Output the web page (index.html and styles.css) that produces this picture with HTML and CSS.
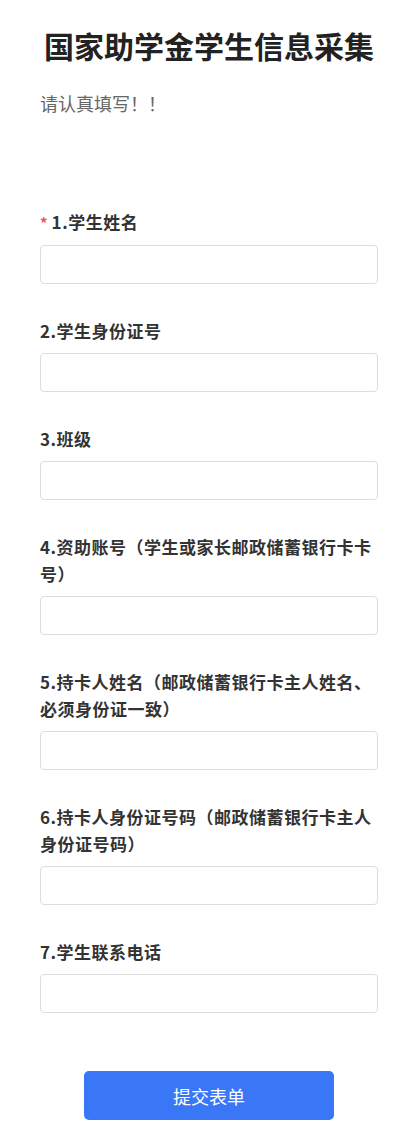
FILE: index.html
```html
<!DOCTYPE html>
<html lang="zh-CN">
<head>
    <meta charset="UTF-8">
    <title>国家助学金学生信息采集</title>
    <meta name="viewport" content="width=device-width, initial-scale=1.0"/>
    <link rel="stylesheet" href="styles.css">
</head>
<body>
    <div class="container">
        <h1 class="title">国家助学金学生信息采集</h1>
        <p class="desc">请认真填写！！</p>

        <form class="form" onsubmit="return false;">
            <div class="field">
                <label class="label"><span class="required">*</span>1.学生姓名</label>
                <input class="input" type="text">
            </div>
            <div class="field">
                <label class="label">2.学生身份证号</label>
                <input class="input" type="text">
            </div>
            <div class="field">
                <label class="label">3.班级</label>
                <input class="input" type="text">
            </div>
            <div class="field">
                <label class="label">4.资助账号（学生或家长邮政储蓄银行卡卡号）</label>
                <input class="input" type="text">
            </div>
            <div class="field">
                <label class="label">5.持卡人姓名（邮政储蓄银行卡主人姓名、必须身份证一致）</label>
                <input class="input" type="text">
            </div>
            <div class="field">
                <label class="label">6.持卡人身份证号码（邮政储蓄银行卡主人身份证号码）</label>
                <input class="input" type="text">
            </div>
            <div class="field">
                <label class="label">7.学生联系电话</label>
                <input class="input" type="text">
            </div>

            <div class="actions">
                <button class="submit-btn" type="submit">提交表单</button>
            </div>
        </form>
    </div>
</body>
</html>
```

FILE: styles.css
```css
body {
    margin: 0;
    background: #fff;
    font-family: "Noto Sans CJK SC", "Noto Sans", Arial, sans-serif;
    color: #333;
}
.container {
    padding: 22px 40px 20px 40px;
}
.title {
    margin: 0;
    font-size: 30px;
    line-height: 46px;
    font-weight: bold;
    color: #222;
    text-align: center;
}
.desc {
    margin: 21px 0 0 0;
    font-size: 18px;
    line-height: 28px;
    color: #666;
}
.form {
    margin-top: 91px;
}
.field {
    margin-bottom: 33px;
}
.label {
    display: block;
    font-size: 17px;
    letter-spacing: 0.5px;
    line-height: 27px;
    font-weight: bold;
    color: #333;
    margin-bottom: 9px;
}
.required {
    color: #f5504f;
    font-size: 15px;
    margin-right: 4px;
    letter-spacing: 0;
}
.input {
    display: block;
    box-sizing: border-box;
    width: 100%;
    height: 39px;
    padding: 0 10px;
    border: 1px solid #ddd;
    border-radius: 4px;
    font-size: 16px;
    font-family: inherit;
    outline: none;
}
.actions {
    text-align: center;
    margin-top: 58px;
}
.submit-btn {
    width: 250px;
    height: 49px;
    background: #3a77f6;
    color: #fff;
    border: none;
    border-radius: 5px;
    font-size: 18px;
    font-family: inherit;
    cursor: pointer;
}
```
